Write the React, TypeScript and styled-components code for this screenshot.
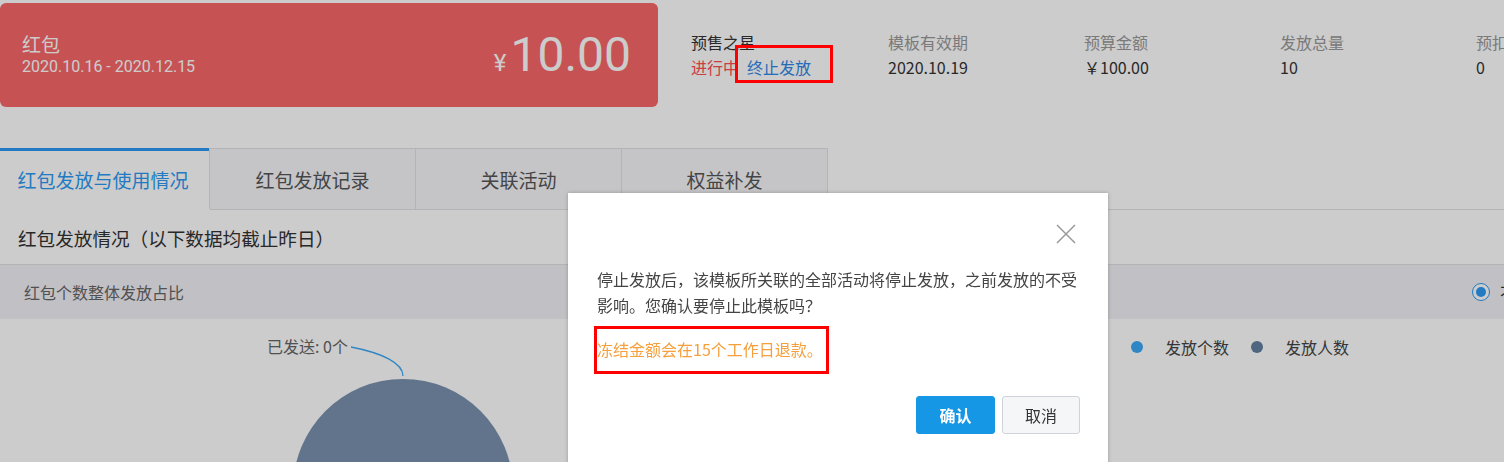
import React from 'react';
import styled, { createGlobalStyle } from 'styled-components';

const GlobalStyle = createGlobalStyle`
  html, body { margin: 0; padding: 0; background: #fff; }
  body {
    font-family: "Noto Sans CJK SC", "Noto Sans", sans-serif;
    color: #333;
    overflow: hidden;
  }
  #root { width: 1504px; height: 462px; overflow: hidden; }
`;

const Page = styled.div`
  width: 1600px;
`;

const Header = styled.div`
  display: flex;
  align-items: center;
  padding-top: 3px;
`;

const Card = styled.div`
  box-sizing: border-box;
  flex: 0 0 658px;
  width: 658px;
  height: 104px;
  border-radius: 6px;
  background: #f96769;
  color: #fff;
  display: flex;
  align-items: center;
  justify-content: space-between;
  padding: 0 27px 0 22px;
`;

const CardTitle = styled.div`
  font-size: 19px;
  line-height: 24px;
`;

const CardDates = styled.div`
  font-family: Roboto, "Noto Sans", sans-serif;
  font-size: 16px;
  line-height: 22px;
`;

const Amount = styled.div`
  display: flex;
  align-items: baseline;
  font-family: Roboto, "Noto Sans", sans-serif;
`;

const Yen = styled.span`
  font-size: 24px;
  margin-right: 4px;
`;

const Num = styled.span`
  font-size: 48px;
  line-height: 1;
`;

const InfoGrid = styled.div`
  flex: 0 0 auto;
  margin-left: 33px;
  display: grid;
  grid-template-columns: 197px repeat(4, 196px);
`;

const InfoCol = styled.div`
  display: flex;
  flex-direction: column;
  font-size: 16px;
  line-height: 25px;
`;

const Label = styled.div<{ $dark?: boolean }>`
  color: ${(p) => (p.$dark ? '#333' : '#999')};
  white-space: nowrap;
`;

const Value = styled.div`
  color: #333;
  display: flex;
  gap: 8px;
  white-space: nowrap;
`;

const Status = styled.span`
  color: #ff4d4f;
`;

const StopLink = styled.span`
  position: relative;
  color: #2f86e6;
  cursor: pointer;
`;

const Annotation = styled.span<{ $l: number; $t: number; $w: number; $h: number }>`
  position: absolute;
  left: ${(p) => p.$l}px;
  top: ${(p) => p.$t}px;
  width: ${(p) => p.$w}px;
  height: ${(p) => p.$h}px;
  box-sizing: border-box;
  border: 3px solid #ff0000;
  z-index: 40;
  pointer-events: none;
`;

const TabBar = styled.div`
  margin-top: 41px;
  box-sizing: border-box;
  height: 62px;
  display: flex;
  border-bottom: 1px solid #e1e1e4;
`;

const Tab = styled.div<{ $active?: boolean }>`
  box-sizing: border-box;
  display: flex;
  align-items: center;
  justify-content: center;
  font-size: 19px;
  ${(p) =>
    p.$active
      ? `
    width: 210px;
    height: 62px;
    border-top: 3px solid #2b9af3;
    background: #fff;
    color: #2b9af3;
    padding-bottom: 2px;
    padding-right: 4px;
  `
      : `
    width: 207px;
    height: 61px;
    border: 1px solid #e1e1e4;
    border-bottom: none;
    background: #f7f7fa;
    color: #555;
    & + & { margin-left: -1px; }
  `}
`;

const SectionTitle = styled.div`
  height: 54px;
  display: flex;
  align-items: center;
  padding-left: 18px;
  font-size: 18.6px;
  color: #333;
`;

const Band = styled.div`
  border-top: 1px solid #e1e1e1;
  height: 54px;
  background: #f2f1f7;
  display: flex;
  align-items: center;
  padding-left: 24px;
  font-size: 16px;
  color: #666;
`;

const RadioGroup = styled.label`
  margin-left: auto;
  margin-right: 68px;
  display: flex;
  align-items: center;
  gap: 10px;
  color: #333;
`;

const RadioCircle = styled.span`
  box-sizing: border-box;
  width: 18px;
  height: 18px;
  border-radius: 50%;
  border: 1px solid #2b9af3;
  background: #fff;
  display: flex;
  align-items: center;
  justify-content: center;
  &::after {
    content: '';
    width: 10px;
    height: 10px;
    border-radius: 50%;
    background: #2b9af3;
  }
`;

const ChartArea = styled.div`
  display: flex;
  height: 200px;
`;

const Legend = styled.div`
  display: flex;
  align-items: center;
  gap: 22px;
  padding-left: 11px;
  height: 24px;
  margin-top: 16px;
  font-size: 16px;
  color: #444;
`;

const LegendItem = styled.div`
  display: flex;
  align-items: center;
  gap: 22px;
`;

const Dot = styled.span<{ $c: string }>`
  width: 12px;
  height: 12px;
  border-radius: 50%;
  background: ${(p) => p.$c};
`;

const Overlay = styled.div`
  position: fixed;
  inset: 0;
  background: rgba(0, 0, 0, 0.2);
  z-index: 10;
`;

const Modal = styled.div`
  position: fixed;
  left: 568px;
  top: 193px;
  width: 540px;
  height: 320px;
  box-sizing: border-box;
  background: #fff;
  z-index: 20;
  padding: 0 28px 0 29px;
  box-shadow: 0 0 4px rgba(0, 0, 0, 0.25);
`;

const ModalHeader = styled.div`
  height: 73px;
  box-sizing: border-box;
  display: flex;
  justify-content: flex-end;
  align-items: flex-start;
  padding-top: 31px;
  padding-right: 4px;
`;

const CloseBtn = styled.button`
  border: none;
  background: none;
  padding: 0;
  width: 20px;
  height: 20px;
  cursor: pointer;
  display: block;
`;

const ModalText = styled.p`
  margin: 0;
  font-size: 16px;
  line-height: 26px;
  color: #444;
`;

const Warn = styled.p`
  margin: 18px 0 0;
  font-size: 16px;
  line-height: 26px;
  color: #f5a03c;
`;

const WarnText = styled.span`
  position: relative;
`;

const Actions = styled.div`
  margin-top: 34px;
  display: flex;
  justify-content: flex-end;
  gap: 7px;
`;

const Btn = styled.button<{ $primary?: boolean }>`
  box-sizing: border-box;
  width: ${(p) => (p.$primary ? 79 : 78)}px;
  height: 38px;
  border-radius: 3px;
  font-family: inherit;
  font-size: 16px;
  cursor: pointer;
  ${(p) =>
    p.$primary
      ? `background: #1597e5; border: 1px solid #1597e5; color: #fff; font-weight: 600;`
      : `background: #f5f6f8; border: 1px solid #cfd3d9; color: #333;`}
`;

export default function App() {
  return (
    <>
      <GlobalStyle />
      <Page>
        <Header>
          <Card>
            <div>
              <CardTitle>红包</CardTitle>
              <CardDates>2020.10.16 - 2020.12.15</CardDates>
            </div>
            <Amount>
              <Yen>¥</Yen>
              <Num>10.00</Num>
            </Amount>
          </Card>
          <InfoGrid>
            <InfoCol>
              <Label $dark>预售之星</Label>
              <Value>
                <Status>进行中</Status>
                <StopLink>
                  终止发放
                  <Annotation $l={-12} $t={-10} $w={98} $h={38} />
                </StopLink>
              </Value>
            </InfoCol>
            <InfoCol>
              <Label>模板有效期</Label>
              <Value>2020.10.19</Value>
            </InfoCol>
            <InfoCol>
              <Label>预算金额</Label>
              <Value>￥100.00</Value>
            </InfoCol>
            <InfoCol>
              <Label>发放总量</Label>
              <Value>10</Value>
            </InfoCol>
            <InfoCol>
              <Label>预扣金额</Label>
              <Value>0</Value>
            </InfoCol>
          </InfoGrid>
        </Header>

        <TabBar>
          <Tab $active>红包发放与使用情况</Tab>
          <Tab>红包发放记录</Tab>
          <Tab>关联活动</Tab>
          <Tab>权益补发</Tab>
        </TabBar>

        <SectionTitle>红包发放情况（以下数据均截止昨日）</SectionTitle>

        <Band>
          红包个数整体发放占比
          <RadioGroup>
            <RadioCircle />
            不限
          </RadioGroup>
        </Band>

        <ChartArea>
          <svg width="1120" height="200" viewBox="0 0 1120 200">
            <text x="267" y="34" fontSize="16" fill="#666" fontFamily='"Noto Sans CJK SC", sans-serif'>
              已发送: 0个
            </text>
            <path d="M351 28 C 382 34, 403 44, 403 57" fill="none" stroke="#3ba8f5" strokeWidth="1.3" />
            <circle cx="403" cy="170" r="110" fill="#7a91af" />
          </svg>
          <Legend>
            <LegendItem>
              <Dot $c="#3ba8f5" />
              发放个数
            </LegendItem>
            <LegendItem>
              <Dot $c="#62809f" />
              发放人数
            </LegendItem>
          </Legend>
        </ChartArea>
      </Page>

      <Overlay />
      <Modal>
        <ModalHeader>
          <CloseBtn aria-label="关闭">
            <svg width="20" height="20" viewBox="0 0 20 20">
              <path d="M1 1 L19 19 M19 1 L1 19" stroke="#999" strokeWidth="1.5" fill="none" />
            </svg>
          </CloseBtn>
        </ModalHeader>
        <ModalText>停止发放后，该模板所关联的全部活动将停止发放，之前发放的不受影响。您确认要停止此模板吗？</ModalText>
        <Warn>
          <WarnText>
            冻结金额会在15个工作日退款。
            <Annotation $l={-3} $t={-11} $w={235} $h={48} />
          </WarnText>
        </Warn>
        <Actions>
          <Btn $primary>确认</Btn>
          <Btn>取消</Btn>
        </Actions>
      </Modal>
    </>
  );
}
